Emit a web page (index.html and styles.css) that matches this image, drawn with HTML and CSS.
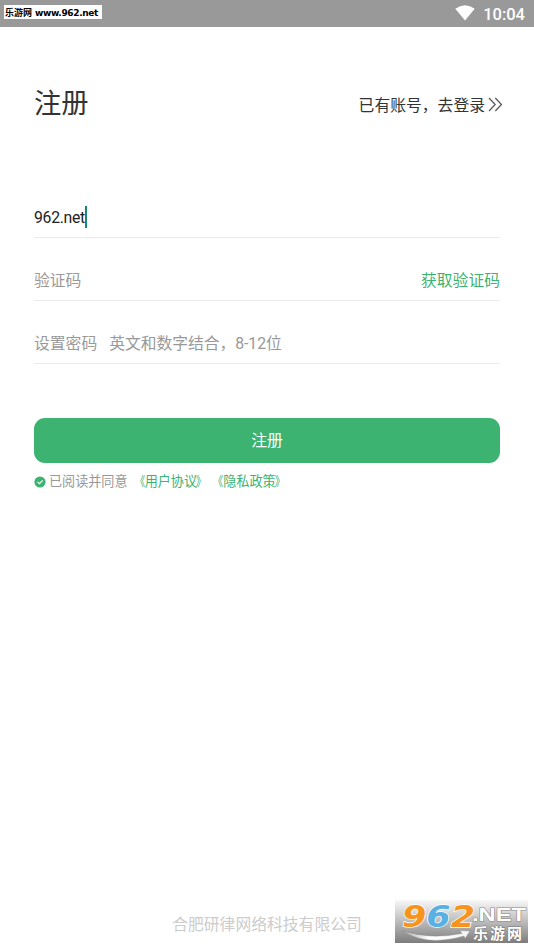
FILE: index.html
```html
<!DOCTYPE html>
<html lang="zh-CN">
<head>
<meta charset="utf-8">
<title>注册</title>
<link rel="stylesheet" href="styles.css">
</head>
<body>
<div class="screen">
  <header class="status">
    <span class="source"><b class="source-cn">乐游网</b><b class="source-url">www.962.net</b></span>
    <span class="system">
      <svg class="wifi" viewBox="0 0 20 16"><path d="M0.3 3.7Q10-3.3 19.7 3.7L10 15.6Z" fill="#fff"/></svg>
      <span class="clock">10:04</span>
    </span>
  </header>
  <main class="content">
    <div class="heading">
      <h1>注册</h1>
      <a class="login"><span>已有账号，去登录</span><svg class="chevrons" viewBox="0 0 15 15"><path d="M1 1l6.2 6.5L1 14M7.3 1l6.2 6.5L7.3 14" fill="none" stroke="#555" stroke-width="1.2"/></svg></a>
    </div>
    <form class="form">
      <div class="field"><span class="value">962.net</span><i class="caret"></i></div>
      <div class="field"><span>验证码</span><a class="code">获取验证码</a></div>
      <div class="field"><span>设置密码</span><span class="hint">英文和数字结合，8-12位</span></div>
      <button class="submit" type="button">注册</button>
    </form>
    <div class="agreement">
      <svg class="check" viewBox="0 0 12 12"><circle cx="6" cy="6" r="5.6" fill="#3cb371"/><path d="M3.5 5.9l1.9 1.8 3.2-3.2" fill="none" stroke="#fff" stroke-width="1.1"/></svg>
      <span class="agree">已阅读并同意</span><a class="link"><span class="open">《</span>用户协议<span class="close">》</span></a><a class="link"><span class="open">《</span>隐私政策<span class="close">》</span></a>
    </div>
  </main>
  <footer class="company">合肥研律网络科技有限公司</footer>
  <svg class="watermark" viewBox="0 0 133 43">
    <defs>
      <linearGradient id="shade" x1="0" y1="0" x2="0" y2="1"><stop offset="0" stop-color="#f8f8f8"/><stop offset=".45" stop-color="#c2c2c2"/><stop offset="1" stop-color="#7d7d7d"/></linearGradient>
      <linearGradient id="swoosh" x1="0" y1="0" x2="1" y2="0"><stop offset="0" stop-color="#aaa"/><stop offset=".4" stop-color="#fff"/><stop offset="1" stop-color="#f4f4f4"/></linearGradient>
    </defs>
    <rect width="133" height="43" fill="url(#shade)"/>
    <text class="digits" x="7" y="26.5" textLength="73" lengthAdjust="spacingAndGlyphs"><tspan fill="#f7941e">9</tspan><tspan fill="#58b0e3">6</tspan><tspan fill="#f7941e">2</tspan></text>
    <text class="domain" x="77" y="21" textLength="54" lengthAdjust="spacingAndGlyphs">.NET</text>
    <path d="M7 30.5Q34 40 67 33.5L65 30.5L75 31L70 38.5L69 36Q31 47 7 30.5Z" fill="url(#swoosh)" stroke="#888" stroke-width=".4"/>
    <text class="brand" x="78" y="38.5" textLength="49">乐游网</text>
  </svg>
</div>
</body>
</html>
```
FILE: styles.css
```css
* { box-sizing: border-box; }
body {
  margin: 0;
  background: #fff;
  color: #333;
  font: 15.8px/24px Roboto, "Noto Sans CJK SC", sans-serif;
}
.screen {
  position: relative;
  display: flex;
  flex-direction: column;
  height: 949px;
  overflow: hidden;
}
.status {
  display: flex;
  justify-content: space-between;
  height: 27px;
  padding: 5px 9px 0 4px;
  background: #999;
}
.source {
  display: flex;
  align-items: center;
  gap: 3px;
  width: 98px;
  height: 14px;
  padding-left: 1px;
  background: #fff;
  color: #000;
  white-space: nowrap;
  line-height: 14px;
}
.source-cn { padding-top: 2px; font-family: "Noto Sans CJK SC", sans-serif; font-size: 9px; }
.source-url { padding-top: 1px; font-family: "DejaVu Sans", sans-serif; font-size: 9px; letter-spacing: -.35px; }
.system { display: flex; gap: 8px; }
.wifi { width: 20px; height: 16px; }
.clock { color: #fff; font-size: 16.5px; font-weight: 500; line-height: 19px; }
.content { flex: 1; padding: 0 34px; }
.heading {
  display: flex;
  justify-content: space-between;
  align-items: center;
  height: 150px;
  margin-right: -3px;
}
h1 { margin: 0; padding-top: 4px; font-size: 27.3px; font-weight: 400; line-height: 40px; }
.login { display: flex; align-items: center; gap: 3px; padding-top: 6px; }
.login span { padding-top: 1px; }
.chevrons { width: 15px; height: 15px; margin-bottom: 1px; }
.form { display: flex; flex-direction: column; margin-top: -2px; }
.field {
  display: flex;
  align-items: flex-end;
  height: 63px;
  padding-bottom: 7px;
  border-bottom: 1px solid #ebebeb;
  color: #999;
}
.value { color: #222; letter-spacing: -.3px; }
.caret { width: 2px; height: 22px; margin-bottom: 2px; background: #168878; }
.code { margin-left: auto; color: #3cb371; }
.hint { margin-left: 12px; letter-spacing: -.05px; }
.submit {
  height: 45px;
  margin-top: 54px;
  padding: 0;
  border: 0;
  border-radius: 11px;
  background: #3cb371;
  color: #fff;
  font: inherit;
}
.agreement {
  display: flex;
  align-items: center;
  height: 20px;
  margin-top: 9px;
  color: #999;
  font-size: 13.1px;
  line-height: 20px;
}
.check { width: 12px; height: 12px; margin: -1px 3px 0 0; }
.agree { margin-right: 4px; }
.link { color: #3cb371; }
.open, .close { display: inline-block; }
.open { transform: translateX(1.5px) scaleX(.8); }
.close { transform: translateX(-2.5px) scaleX(.8); }
.company { height: 36px; color: #ccc; text-align: center; }
.watermark { position: absolute; left: 395px; top: 900px; width: 133px; height: 43px; }
.digits {
  font: italic bold 31px/1 "DejaVu Sans", sans-serif;
  stroke: #fff;
  stroke-width: 1.4px;
  paint-order: stroke;
}
.domain {
  font: bold 18px/1 "Liberation Sans", sans-serif;
  fill: #fff;
  stroke: #888;
  stroke-width: 1px;
  paint-order: stroke;
}
.brand {
  font: bold 15px/1 "Noto Sans CJK SC", sans-serif;
  fill: #fff;
  stroke: #777;
  stroke-width: 1px;
  paint-order: stroke;
}
```
